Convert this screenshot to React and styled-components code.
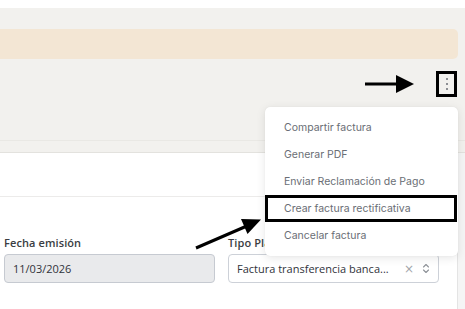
import React from "react";
import styled, { createGlobalStyle } from "styled-components";

const Global = createGlobalStyle`
  html, body { margin: 0; padding: 0; background: #fff; }
  body { width: 465px; height: 309px; overflow: hidden; font-family: "Inter", "Roboto", sans-serif; }
  * { box-sizing: border-box; }
`;

const Page = styled.div`
  position: relative;
  width: 465px;
  height: 309px;
  display: flex;
  flex-direction: column;
  background: #fff;
`;

const TopStrip = styled.div`
  height: 8px;
  background: #fff;
`;

const Header = styled.div`
  background: #f2f1ee;
  padding-top: 21px;
  display: flex;
  flex-direction: column;
`;

const Banner = styled.div`
  height: 30px;
  margin-right: 7px;
  background: #f3e6d4;
  border-radius: 0 5px 5px 0;
`;

const ActionRow = styled.div`
  height: 81px;
  display: flex;
  justify-content: flex-end;
  align-items: flex-start;
  padding: 12px 8px 0 0;
`;

const KebabButton = styled.div`
  width: 21px;
  height: 26px;
  border: 3px solid #000;
  display: flex;
  flex-direction: column;
  align-items: center;
  justify-content: center;
  gap: 3px;
`;

const Dot = styled.span`
  width: 2px;
  height: 2px;
  border-radius: 50%;
  background: #6b6e75;
`;

const TabBand = styled.div`
  height: 13px;
  border-top: 1px solid #e9e8e4;
  border-bottom: 1px solid #e3e2de;
  background: #f2f1ee;
`;

const Body = styled.div`
  flex: 1;
  display: flex;
`;

const Main = styled.div`
  width: 458px;
  border-right: 1px solid #e4e4e4;
  display: flex;
  flex-direction: column;
`;

const ScrollTrack = styled.div`
  flex: 1;
  background: #f5f5f5;
`;

const Separator = styled.div`
  margin-top: 43px;
  height: 1px;
  background: #ecebea;
`;

const FormRow = styled.div`
  margin-top: 39px;
  display: flex;
  gap: 13px;
  padding-left: 4px;
`;

const Field = styled.div`
  width: ${(p) => p.$w}px;
  display: flex;
  flex-direction: column;
  gap: 5px;
`;

const Label = styled.div`
  font-family: "Open Sans", "Lato", sans-serif;
  font-weight: 600;
  font-size: 11px;
  line-height: 13px;
  color: #3a3d42;
  letter-spacing: 0.1px;
`;

const Input = styled.div`
  height: 29px;
  border: 1px solid ${(p) => (p.$disabled ? "#c6cad1" : "#cdd1d8")};
  border-radius: 4px;
  background: ${(p) => (p.$disabled ? "#e9eaec" : "#fff")};
  display: flex;
  align-items: center;
  padding: 0 8px;
  font-family: "Open Sans", "Lato", sans-serif;
  font-size: 11px;
  color: #30333a;
  gap: 8px;
`;

const InputText = styled.span`
  flex: 1;
  white-space: nowrap;
  overflow: hidden;
`;

const Clear = styled.span`
  color: #a3a6ab;
  font-size: 12px;
  font-family: "DejaVu Sans", sans-serif;
`;

const Menu = styled.div`
  position: absolute;
  left: 265px;
  top: 107px;
  width: 193px;
  padding: 7px 0;
  background: #fff;
  border-radius: 5px;
  box-shadow: 0 2px 10px rgba(0, 0, 0, 0.1), 0 0 1px rgba(0, 0, 0, 0.1);
  display: flex;
  flex-direction: column;
`;

const MenuItem = styled.div`
  height: 27px;
  display: flex;
  align-items: center;
  padding-left: 19px;
  font-family: "Inter", "Roboto", sans-serif;
  font-size: 10.5px;
  color: #6a6e75;
  box-shadow: ${(p) => (p.$marked ? "inset 0 0 0 3px #000" : "none")};
  margin-right: ${(p) => (p.$marked ? "1px" : "0")};
`;

const Arrows = styled.svg`
  position: absolute;
  left: 0;
  top: 0;
  pointer-events: none;
`;

export default function App() {
  const items = [
    "Compartir factura",
    "Generar PDF",
    "Enviar Reclamación de Pago",
    "Crear factura rectificativa",
    "Cancelar factura",
  ];
  return (
    <Page>
      <Global />
      <TopStrip />
      <Header>
        <Banner />
        <ActionRow>
          <KebabButton>
            <Dot />
            <Dot />
            <Dot />
          </KebabButton>
        </ActionRow>
        <TabBand />
      </Header>
      <Body>
        <Main>
          <Separator />
          <FormRow>
            <Field $w={211}>
              <Label>Fecha emisión</Label>
              <Input $disabled>
                <InputText>11/03/2026</InputText>
              </Input>
            </Field>
            <Field $w={211}>
              <Label>Tipo Plantilla</Label>
              <Input>
                <InputText>Factura transferencia banca...</InputText>
                <Clear>×</Clear>
                <svg width="8" height="11" viewBox="0 0 8 11">
                  <path d="M1.5 4 L4 1.5 L6.5 4 M1.5 7 L4 9.5 L6.5 7" fill="none" stroke="#8e9298" strokeWidth="1.1" strokeLinecap="round" strokeLinejoin="round" />
                </svg>
              </Input>
            </Field>
          </FormRow>
        </Main>
        <ScrollTrack />
      </Body>
      <Menu>
        {items.map((t, i) => (
          <MenuItem key={t} $marked={i === 3}>
            {t}
          </MenuItem>
        ))}
      </Menu>
      <Arrows width="465" height="309" viewBox="0 0 465 309">
        <line x1="365" y1="84" x2="399" y2="84" stroke="#000" strokeWidth="3" />
        <polygon points="396,75 414,84 396,93" fill="#000" />
        <line x1="196" y1="248" x2="248" y2="225.5" stroke="#000" strokeWidth="3" />
        <polygon points="261,219.5 241,219 247.5,234" fill="#000" />
      </Arrows>
    </Page>
  );
}
